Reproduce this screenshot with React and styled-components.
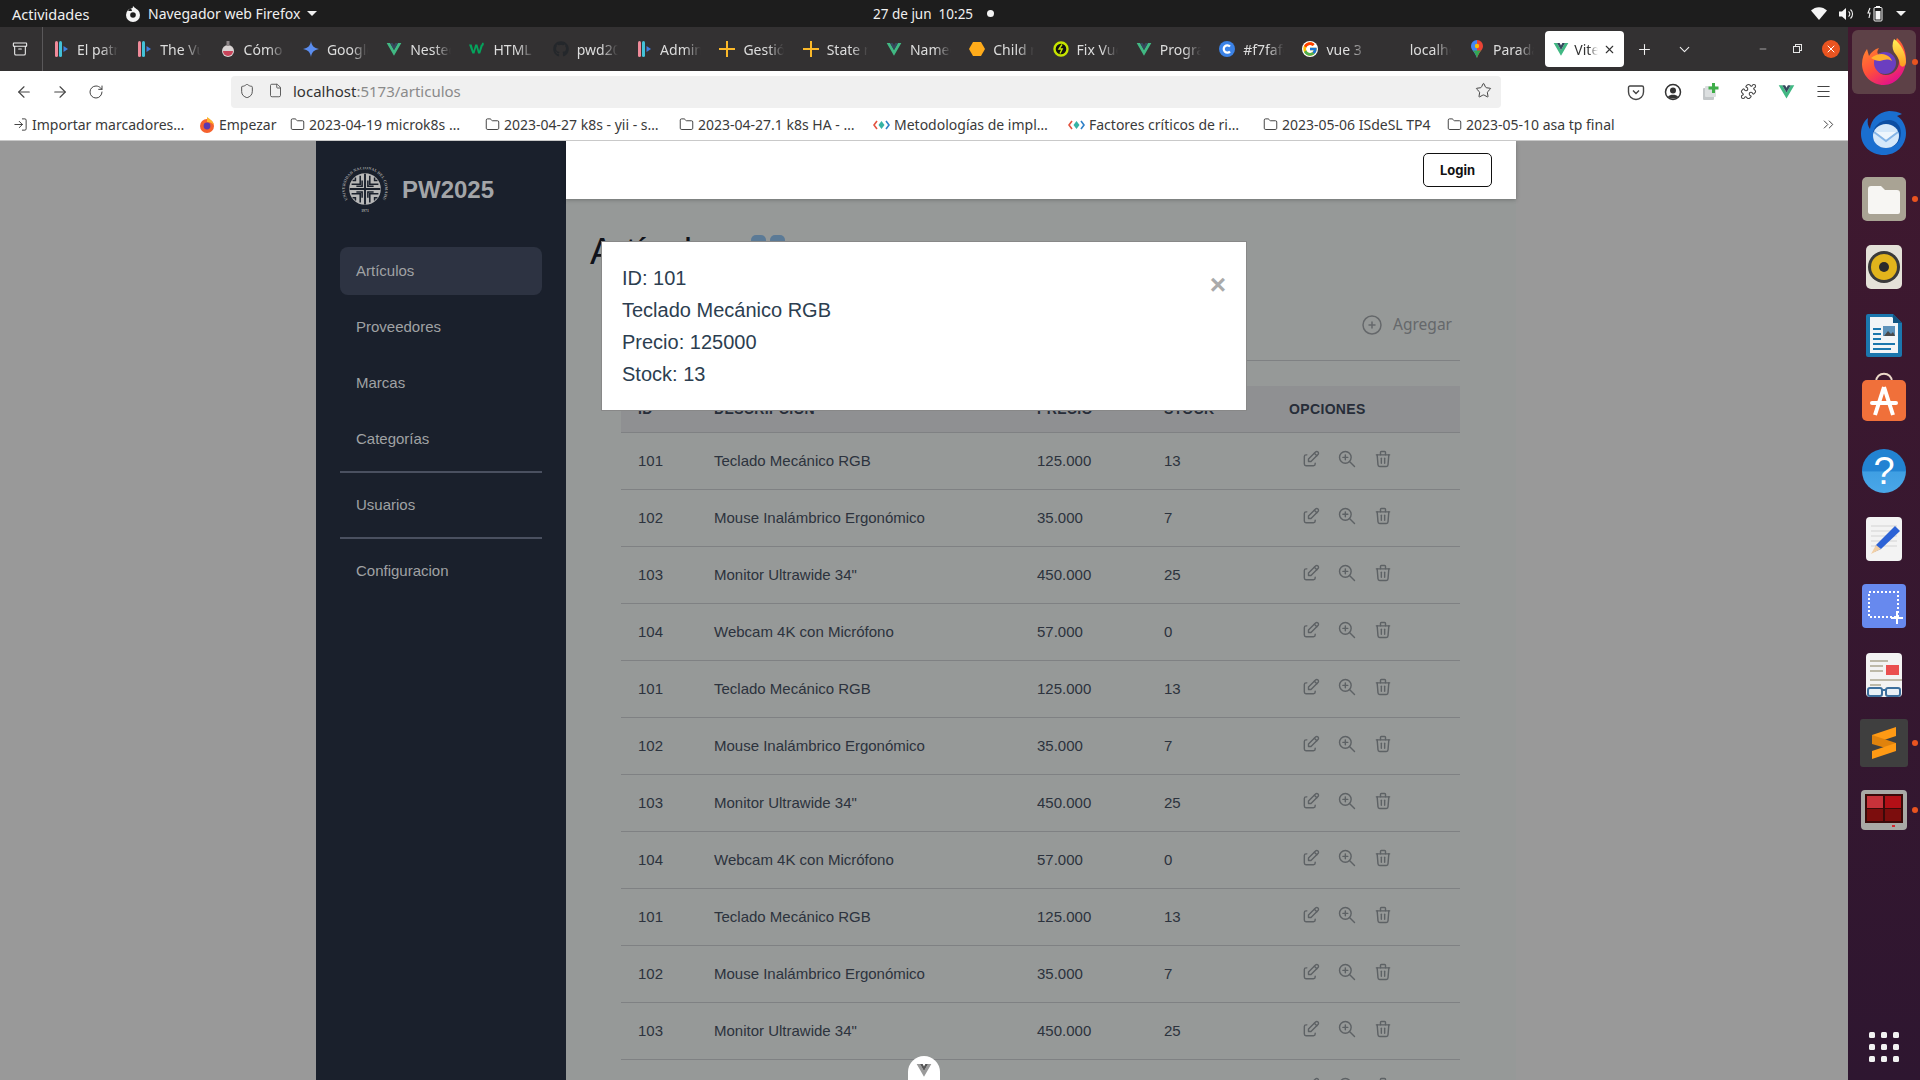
import React from 'react';
import styled, { createGlobalStyle } from 'styled-components';
import { ArrowLeft, ArrowRight, RotateCw, Shield, File, Star, Puzzle, Menu, ChevronsRight, Folder, Plus, ChevronDown, X, Minus, LogIn, Archive } from 'lucide-react';
import { TbEdit, TbZoomIn, TbTrash, TbCirclePlus } from 'react-icons/tb';
import { FcGoogle } from 'react-icons/fc';
import { FaGithub } from 'react-icons/fa';

const GlobalStyle = createGlobalStyle`
  html, body { margin: 0; padding: 0; background: #1d1d1d; }
  * { box-sizing: border-box; }
`;

const UI_FONT = `"Noto Sans", "Open Sans", sans-serif`;
const PAGE_FONT = `"Liberation Sans", Arial, sans-serif`;

const Screen = styled.div`
  width: 1920px;
  height: 1080px;
  overflow: hidden;
  display: flex;
  flex-direction: column;
  font-family: ${UI_FONT};
`;

/* ---------- gnome top bar ---------- */
const TopBar = styled.div`
  height: 27px;
  flex: none;
  background: #1d1d1d;
  color: #f0f0f0;
  font-size: 14px;
  display: flex;
  align-items: center;
  padding: 0 12px;
`;
const Activities = styled.span`
  width: 113px;
  font-size: 14.5px;
`;
const AppMenu = styled.div`
  width: 748px;
  display: flex;
  align-items: center;
  gap: 7px;
`;
const Caret = styled.span`
  width: 0;
  height: 0;
  border-left: 5px solid transparent;
  border-right: 5px solid transparent;
  border-top: 5px solid #f0f0f0;
`;
const Clock = styled.span`
  white-space: pre;
  font-size: 13.5px;
`;
const RecDot = styled.span`
  width: 7px;
  height: 7px;
  border-radius: 50%;
  background: #f4f4f4;
  margin-left: 14px;
`;
const Tray = styled.div`
  margin-left: auto;
  display: flex;
  align-items: center;
  gap: 12px;
  margin-right: 2px;
`;

/* ---------- browser ---------- */
const Desktop = styled.div`
  flex: 1;
  min-height: 0;
  display: flex;
`;
const Browser = styled.div`
  width: 1848px;
  display: flex;
  flex-direction: column;
`;
const TabBar = styled.div`
  height: 44px;
  flex: none;
  background: #333132;
  display: flex;
  align-items: center;
`;
const TabMenu = styled.div`
  width: 43px;
  height: 100%;
  margin-right: 10px;
  border-right: 1px solid #5a585a;
  display: flex;
  align-items: center;
  justify-content: center;
  color: #f0f0f0;
  padding-right: 3px;
`;
const Tab = styled.div`
  width: 83.3px;
  flex: none;
  display: flex;
  align-items: center;
  gap: 8px;
  color: #dddddd;
  font-size: 14px;
  overflow: hidden;
`;
const TabIconBox = styled.span`
  width: 16px;
  height: 16px;
  flex: none;
  display: flex;
  align-items: center;
  justify-content: center;
`;
const TabLabel = styled.span`
  width: 41px;
  white-space: nowrap;
  overflow: hidden;
  mask-image: linear-gradient(to right, #000 60%, transparent 100%);
`;
const ActiveTab = styled.div`
  width: 79px;
  height: 36px;
  margin-left: -7px;
  padding-left: 8px;
  flex: none;
  background: #fff;
  border-radius: 4px;
  display: flex;
  align-items: center;
  gap: 5px;
  color: #333;
  font-size: 14px;
`;
const ActiveLabel = styled(TabLabel)`
  width: 24px;
`;
const TabAction = styled.div`
  width: 40px;
  flex: none;
  color: #f0f0f0;
  display: flex;
  justify-content: center;
`;
const WindowControls = styled.div`
  margin-left: auto;
  display: flex;
  align-items: center;
`;
const WindowButton = styled.div`
  width: 34px;
  display: flex;
  justify-content: center;
  color: #e6e6e6;
`;
const CloseCircle = styled.span`
  width: 18px;
  height: 18px;
  border-radius: 50%;
  background: #e95420;
  color: #fff;
  display: flex;
  align-items: center;
  justify-content: center;
`;
const RestoreGlyph = styled.span`
  width: 7px;
  height: 7px;
  margin: 1px 2px 0 0;
  border: 1px solid #e6e6e6;
  box-shadow: 2px -2px 0 -1px #333132, 2px -2px 0 0 #e6e6e6;
`;

const NavBar = styled.div`
  height: 37px;
  flex: none;
  background: #fff;
  display: flex;
  align-items: center;
  padding: 4px 0 0 6px;
  color: #444;
`;
const NavButton = styled.div`
  width: 36px;
  flex: none;
  display: flex;
  justify-content: center;
`;
const UrlBar = styled.div`
  width: 1270px;
  height: 32px;
  margin: 0 116px 0 117px;
  flex: none;
  background: #f0f0f0;
  border-radius: 4px;
  display: flex;
  align-items: center;
  padding: 0 8px 2px 2px;
  font-size: 15px;
  color: #8a8a8a;
`;
const UrlIcon = styled.span`
  width: 28px;
  display: flex;
  justify-content: center;
  color: #555;
  flex: none;
`;
const UrlHost = styled.span`
  color: #333;
  margin-left: 4px;
`;
const UrlStar = styled.span`
  margin-left: auto;
  display: flex;
  color: #444;
  margin-right: 1px;
`;
const ToolIcon = styled.div`
  width: 37.6px;
  flex: none;
  display: flex;
  justify-content: center;
`;

const BookmarkBar = styled.div`
  height: 33px;
  flex: none;
  background: #fff;
  border-bottom: 1px solid #c9c9c9;
  display: flex;
  align-items: center;
  padding: 1px 0 0 13px;
  font-size: 14px;
  color: #3a3a3a;
`;
const Bookmark = styled.div`
  width: ${p => p.$w}px;
  flex: none;
  display: flex;
  align-items: center;
  gap: 4px;
  white-space: nowrap;
  overflow: hidden;
`;
const BookmarkMore = styled.div`
  margin-left: auto;
  margin-right: 11px;
  display: flex;
  color: #444;
`;

/* ---------- web page ---------- */
const Page = styled.div`
  flex: 1;
  min-height: 0;
  position: relative;
  overflow: hidden;
  background: #fff;
  display: flex;
  padding-left: 316px;
  font-family: ${PAGE_FONT};
`;
const Sidebar = styled.aside`
  width: 250px;
  flex: none;
  background: #1a202c;
  padding: 25px 24px;
  position: relative;
  z-index: 20;
`;
const Brand = styled.div`
  height: 48px;
  margin: 0 0 33px 2px;
  display: flex;
  align-items: center;
  gap: 14px;
  color: #a3a5a8;
  font-size: 24px;
  font-weight: 700;
`;
const NavItem = styled.div`
  height: 48px;
  margin-bottom: 8px;
  padding: 0 0 2px 16px;
  border-radius: 8px;
  display: flex;
  align-items: center;
  font-size: 15px;
  color: #a0a2a4;
  background: ${p => (p.$active ? '#2d3342' : 'transparent')};
`;
const NavDivider = styled.div`
  height: 2px;
  background: #4a5060;
  margin-bottom: 8px;
`;
const Main = styled.main`
  width: 950px;
  flex: none;
  display: flex;
  flex-direction: column;
  background: #fbfffd;
`;
const Header = styled.header`
  height: 58px;
  flex: none;
  background: #fff;
  box-shadow: 0 1px 4px rgba(0, 0, 0, 0.25);
  display: flex;
  align-items: center;
  justify-content: flex-end;
  padding-right: 24px;
  position: relative;
  z-index: 20;
`;
const LoginButton = styled.button`
  width: 69px;
  height: 34px;
  padding: 0;
  background: #fff;
  border: 1px solid #111;
  border-radius: 5px;
  font-family: Inter, sans-serif;
  font-size: 13px;
  font-weight: 700;
  color: #111;
`;
const Content = styled.div`
  padding: 31px 24px 0;
`;
const TitleRow = styled.div`
  display: flex;
  align-items: flex-start;
  gap: 21px;
`;
const Title = styled.h1`
  margin: 0;
  font-size: 36px;
  line-height: 44px;
  font-weight: 400;
  color: #1a202c;
`;
const TitleBadge = styled.div`
  margin-top: 5px;
  display: flex;
  gap: 4px;
`;
const BadgeBlock = styled.span`
  width: 15px;
  height: 24px;
  border-radius: 5px;
  background: #98cbfa;
`;
const Card = styled.div`
  padding: 0 32px 0 31px;
`;
const ActionBar = styled.div`
  height: 87px;
  padding: 39px 8px 0 0;
  border-bottom: 1px solid #d4d8da;
  display: flex;
  align-items: flex-start;
  justify-content: flex-end;
  gap: 9px;
  font-family: ${UI_FONT};
  font-size: 15.5px;
  color: #a8aeb2;
`;
const Grid = styled.div`
  margin-top: 25px;
`;
const HeadRow = styled.div`
  height: 47px;
  padding-left: 17px;
  background: #eef1f4;
  border-bottom: 1px solid #d4d8da;
  display: grid;
  grid-template-columns: 76px 323px 127px 125px 1fr;
  align-items: center;
  font-size: 14px;
  font-weight: 700;
  letter-spacing: 0.35px;
  color: #414b5f;
`;
const BodyRow = styled.div`
  height: 57px;
  padding: 0 0 2px 17px;
  border-bottom: 1px solid #d4d8da;
  display: grid;
  grid-template-columns: 76px 323px 127px 125px 1fr;
  align-items: center;
  font-size: 15px;
  color: #4a5568;
`;
const Options = styled.div`
  display: flex;
  gap: 16px;
  padding: 0 0 2px 12px;
  color: #9ca3a8;
`;
const Overlay = styled.div`
  position: absolute;
  inset: 0;
  z-index: 10;
  background: rgba(0, 0, 0, 0.4);
  display: flex;
  justify-content: center;
  align-items: flex-start;
`;
const Modal = styled.div`
  width: 646px;
  height: 170px;
  margin-top: 100px;
  padding: 20px;
  background: #fff;
  border: 1px solid #888;
  position: relative;
  font-size: 20px;
  line-height: 32px;
  color: #2c3e50;
`;
const CloseX = styled.span`
  position: absolute;
  top: 27px;
  right: 20px;
  font-size: 28px;
  line-height: 32px;
  font-weight: 700;
  color: #aaa;
`;
const DevtoolsPill = styled.div`
  position: absolute;
  left: 908px;
  bottom: 0;
  width: 32px;
  height: 24px;
  z-index: 30;
  background: #fff;
  border-radius: 16px 16px 0 0;
  display: flex;
  justify-content: center;
  padding-top: 6px;
`;

/* ---------- dock ---------- */
const Dock = styled.nav`
  width: 72px;
  flex: none;
  background: linear-gradient(180deg, #41192f 0%, #2e1630 100%);
  display: flex;
  flex-direction: column;
`;
const DockSlot = styled.div`
  height: 60px;
  margin-top: ${p => p.$mt}px;
  flex: none;
  display: flex;
  align-items: center;
  justify-content: center;
  position: relative;
`;
const DockActive = styled.div`
  width: 64px;
  height: 64px;
  flex: none;
  border-radius: 6px;
  background: #5d4147;
  display: flex;
  align-items: center;
  justify-content: center;
`;
const RunDot = styled.span`
  position: absolute;
  right: 2px;
  top: 50%;
  margin-top: -3px;
  width: 6px;
  height: 6px;
  border-radius: 50%;
  background: #e95420;
`;
const AppGrid = styled.div`
  margin-top: auto;
  margin-bottom: 18px;
  align-self: center;
  display: grid;
  grid-template-columns: repeat(3, 6px);
  gap: 6px;
`;
const AppDot = styled.span`
  width: 6px;
  height: 6px;
  border-radius: 1.5px;
  background: #f2f2f2;
`;

/* ---------- drawings ---------- */
const VueLogo = ({ size = 16, light = '#41b883', dark = '#35495e' }) => (
  <svg width={size} height={size} viewBox="0 0 24 24">
    <path d="M1 3h5l6 10.500L18 3h5L12 22z" fill={light} />
    <path d="M6 3l6 10.500L18 3h-4l-2 3.600L10 3z" fill={dark} />
  </svg>
);
const BarsIcon = () => (
  <svg width="16" height="18" viewBox="0 0 16 18">
    <rect x="2" y="1" width="3" height="16" rx="1.500" fill="#f08a9a" />
    <rect x="6" y="1" width="3" height="16" rx="1.500" fill="#43c1d8" />
    <path d="M10.500 6l4.500 3-4.500 3z" fill="#3f7fe0" />
  </svg>
);
const FlaskIcon = () => (
  <svg width="16" height="18" viewBox="0 0 16 18">
    <circle cx="8" cy="11" r="6" fill="#d9d3d3" />
    <path d="M3 11a5 5 0 0 0 10 0z" fill="#c8445a" />
    <rect x="6.500" y="1" width="3" height="5" fill="#8d8587" />
  </svg>
);
const GemStar = () => (
  <svg width="16" height="16" viewBox="0 0 16 16"><path d="M8 0c.6 4.500 3 7.200 8 8-5 .8-7.400 3.500-8 8-.6-4.500-3-7.200-8-8 5-.8 7.400-3.500 8-8z" fill="#5b8def" /></svg>
);
const W3Icon = () => (
  <svg width="18" height="16" viewBox="0 0 18 16"><path d="M0 3h3l2 7 2-7h2.400l2 7 2-7H16l-3.400 10h-2.400L8.200 6l-2 7H3.800z" fill="#05a35c" /><rect x="14.500" y="1" width="2" height="3" fill="#05a35c" /></svg>
);
const CrossSpark = () => (
  <svg width="16" height="16" viewBox="0 0 16 16"><path d="M7 0h2v7h7v2H9v7H7V9H0V7h7z" fill="#fbb929" /></svg>
);
const HexIcon = () => (
  <svg width="16" height="16" viewBox="0 0 16 16"><path d="M4 1h8l4 7-4 7H4L0 8z" fill="#ffab1a" /></svg>
);
const FixIcon = () => (
  <svg width="16" height="16" viewBox="0 0 16 16"><circle cx="8" cy="8" r="6.500" fill="#111" stroke="#c6e400" strokeWidth="2.400" /><path d="M9 3.500L6 8h3.200L7 12.500" stroke="#c6e400" strokeWidth="1.400" fill="none" /></svg>
);
const CIcon = () => (
  <svg width="16" height="16" viewBox="0 0 16 16"><circle cx="8" cy="8" r="8" fill="#3b82e6" /><path d="M11 5.600a3.600 3.600 0 1 0 0 4.800" stroke="#fff" strokeWidth="2.200" fill="none" /></svg>
);
const PinIcon = () => (
  <svg width="14" height="18" viewBox="0 0 14 18">
    <path d="M7 0a6 6 0 0 1 6 6c0 4-4 6-6 12z" fill="#ea4335" />
    <path d="M7 0a6 6 0 0 0-6 6c0 4 4 6 6 12z" fill="#4285f4" />
    <path d="M3 10.500c1.500 2 3 4 4 7.500 1-3.500 2.500-5.500 4-7.500z" fill="#34a853" />
    <circle cx="7" cy="6" r="2.200" fill="#fbbc04" />
  </svg>
);
const MiniFirefox = () => (
  <svg width="16" height="16" viewBox="0 0 16 16">
    <circle cx="8" cy="9" r="7" fill="#f5622e" />
    <path d="M8 0c3 2 6 4 7 8-2-2-4-3-7-3z" fill="#fcb52e" />
    <circle cx="8" cy="9" r="3.400" fill="#5b3ab0" />
  </svg>
);
const MetodIcon = () => (
  <svg width="17" height="14" viewBox="0 0 17 14">
    <path d="M4 3L1 7l3 4" stroke="#e2533f" strokeWidth="1.600" fill="none" />
    <path d="M13 3l3 4-3 4" stroke="#2f80c8" strokeWidth="1.600" fill="none" />
    <path d="M8.500 3l3 4-3 4-3-4z" fill="#35b3a5" />
  </svg>
);
const TopFirefox = () => (
  <svg width="16" height="16" viewBox="0 0 16 16">
    <circle cx="8" cy="9" r="7" fill="#f5f5f5" />
    <circle cx="8" cy="9" r="2.800" fill="#1d1d1d" />
    <path d="M8 0l3 3-4 2z" fill="#f5f5f5" />
    <path d="M3 5a6 6 0 0 1 3-3l1 3z" fill="#1d1d1d" />
  </svg>
);
const WifiGlyph = () => (
  <svg width="16" height="13" viewBox="0 0 16 13"><path d="M0 3.500C4.500-1 11.500-1 16 3.500L8 13z" fill="#f4f4f4" /></svg>
);
const SpeakerGlyph = () => (
  <svg width="16" height="14" viewBox="0 0 16 14">
    <path d="M0 4.500h3L7 1v12L3 9.500H0z" fill="#f4f4f4" />
    <path d="M9.500 4.500a3 3 0 0 1 0 5M11.500 2.500a6 6 0 0 1 0 9" stroke="#f4f4f4" strokeWidth="1.100" fill="none" />
  </svg>
);
const BatteryGlyph = () => (
  <svg width="17" height="17" viewBox="0 0 17 17">
    <path d="M3 3L1 8h2l-1 5" stroke="#f4f4f4" strokeWidth="1.100" fill="none" />
    <rect x="7" y="2.500" width="8" height="13.500" rx="1" fill="none" stroke="#f4f4f4" />
    <rect x="9" y="1" width="4" height="2" fill="#f4f4f4" />
    <rect x="8.500" y="6" width="5" height="8.500" fill="#f4f4f4" />
  </svg>
);
const ExtIcon = () => (
  <svg width="18" height="18" viewBox="0 0 18 18">
    <rect x="1" y="5" width="11" height="12" rx="1" fill="#c3c7c9" />
    <rect x="3" y="3" width="11" height="11" rx="1" fill="#dcdfe0" />
    <path d="M10 0h3v3.500h3.500v3H13V10h-3V6.500H6.500v-3H10z" fill="#3fae49" />
  </svg>
);
const PocketIcon = () => (
  <svg width="18" height="18" viewBox="0 0 18 18">
    <path d="M3 3h12a1.500 1.500 0 0 1 1.500 1.500V9a7.500 7.500 0 0 1-15 0V4.500A1.500 1.500 0 0 1 3 3z" fill="none" stroke="#444" strokeWidth="1.400" />
    <path d="M6 7.500l3 3 3-3" fill="none" stroke="#444" strokeWidth="1.400" />
  </svg>
);
const ProfileIcon = () => (
  <svg width="18" height="18" viewBox="0 0 18 18">
    <circle cx="9" cy="9" r="7.500" fill="none" stroke="#333" strokeWidth="1.500" />
    <circle cx="9" cy="7.500" r="3" fill="#333" />
    <path d="M4 13.500c2-2.500 8-2.500 10 0l-2 2H6z" fill="#333" />
  </svg>
);

const UncoLogo = () => (
  <svg width="46" height="46" viewBox="0 0 48 48">
    <defs><path id="seal" d="M6 34A21 21 0 1 1 42 34" /></defs>
    <text fontSize="4.200" fontFamily="Liberation Serif, serif" fill="#a8a8a8" letterSpacing=".15"><textPath href="#seal">UNIVERSIDAD NACIONAL DEL COMAHUE</textPath></text>
    <circle cx="24" cy="23" r="16.500" fill="#b8b8b8" />
    <g stroke="#1a202c" strokeWidth="1.600" fill="none">
      <path d="M24 7v32M8 23h32" strokeWidth="2" />
      <path d="M19 9v9h-9M29 9v9h9M19 37v-9h-9M29 37v-9h9" />
      <path d="M14 11v3h-3M34 11v3h3M14 35v-3h-3M34 35v-3h3" />
      <path d="M21 14v6h-6M27 14v6h6M21 32v-6h-6M27 32v-6h6" />
    </g>
    <text x="24" y="47" textAnchor="middle" fontSize="4" fontFamily="Liberation Serif, serif" fill="#a8a8a8">1971</text>
  </svg>
);

const FirefoxApp = () => (
  <svg width="48" height="48" viewBox="0 0 48 48">
    <defs>
      <linearGradient id="ffBody" x1="0" y1="0" x2="0.600" y2="1">
        <stop offset="0" stopColor="#ff9a2b" />
        <stop offset="0.600" stopColor="#ff4f3a" />
        <stop offset="1" stopColor="#e3128a" />
      </linearGradient>
      <linearGradient id="ffTop" x1="0.500" y1="0" x2="0.500" y2="1">
        <stop offset="0" stopColor="#fff157" />
        <stop offset="1" stopColor="#ff9a1f" />
      </linearGradient>
    </defs>
    <path d="M24 47C11 47 2 37 2 26c0-6 2-11 5-15l2 7c2-4 6-7 10-8-2 3-2 5-1 6 4-2 9-1 11 1 5 5 3 14-5 14-5 0-8-4-6-8-4 6 0 14 8 14 8 0 13-7 13-13 0-6-3-9-5-13 0-3 1-7 3-11 5 4 9 12 9 21 0 14-10 26-22 26z" fill="url(#ffBody)" />
    <path d="M34 1c-2 5-2 9 0 13 3 4 6 8 6 13 3 4 6 0 6-3 0-9-5-18-12-23z" fill="url(#ffTop)" />
    <circle cx="25" cy="25" r="11" fill="#6b3ec0" />
    <path d="M11 20c5-4 11-5 15-3 3 1 5 3 6 6-5-3-8-1-12 0-3 0-6-1-9-3z" fill="#ffb02e" />
  </svg>
);
const ThunderbirdApp = () => (
  <svg width="48" height="48" viewBox="0 0 48 48">
    <path d="M24 47C10 47 1 37 1 26c0-6 2-12 7-16-1 5 0 8 2 11 1-9 8-17 19-18 5 0 10 1 13 3l-5 2c5 3 9 9 9 17 0 13-10 22-22 22z" fill="#1a6fd0" />
    <path d="M13 26c0-8 8-14 16-14 7 0 12 6 12 13 0 9-7 15-15 15-8 0-13-6-13-14z" fill="#0c4ea3" />
    <ellipse cx="26" cy="28" rx="13" ry="12" fill="#d5e8fa" />
    <path d="M14 24l12 9 12-9" stroke="#84b4e6" strokeWidth="2" fill="#eef6fd" />
  </svg>
);
const FilesApp = () => (
  <svg width="44" height="44" viewBox="0 0 44 44">
    <rect width="44" height="44" rx="5" fill="#a9a394" />
    <path d="M6 12a3 3 0 0 1 3-3h10l4 4h12a3 3 0 0 1 3 3v19a2 2 0 0 1-2 2H8a2 2 0 0 1-2-2z" fill="#f7f6f3" />
  </svg>
);
const RhythmApp = () => (
  <svg width="36" height="44" viewBox="0 0 36 44">
    <rect width="36" height="44" rx="5" fill="#e4e1d8" />
    <circle cx="18" cy="22" r="16" fill="#3a3a3a" />
    <circle cx="18" cy="22" r="13" fill="#e2b41c" />
    <circle cx="18" cy="22" r="5" fill="#2b2b2b" />
  </svg>
);
const WriterApp = () => (
  <svg width="36" height="44" viewBox="0 0 36 44">
    <path d="M2 1h25l9 9v32a2 2 0 0 1-2 2H2a2 2 0 0 1-2-2V3a2 2 0 0 1 2-2z" fill="#1b77ae" />
    <path d="M4 4h22l6 6v30H4z" fill="#f2f5f7" />
    <path d="M27 1l9 9h-9z" fill="#125582" />
    <rect x="7" y="15" width="8" height="2" fill="#1b77ae" />
    <rect x="7" y="20" width="8" height="2" fill="#1b77ae" />
    <rect x="7" y="25" width="8" height="2" fill="#1b77ae" />
    <rect x="7" y="30" width="22" height="2" fill="#1b77ae" />
    <rect x="7" y="35" width="18" height="2" fill="#1b77ae" />
    <rect x="17" y="13" width="12" height="10" fill="#5e93bb" />
    <path d="M18 23l4-5 3 3 2-2 2 4z" fill="#4a4a4a" />
  </svg>
);
const StoreApp = () => (
  <svg width="44" height="50" viewBox="0 0 44 50">
    <path d="M14 10c0-11 16-11 16 0" fill="none" stroke="#ecd9c8" strokeWidth="2" />
    <rect y="8" width="44" height="41" rx="5" fill="#f0703a" />
    <path d="M22 15L13 43M22 15l9 28" stroke="#fff" strokeWidth="4" fill="none" />
    <rect x="8" y="29" width="28" height="4" rx="2" fill="#fff" />
  </svg>
);
const HelpApp = () => (
  <svg width="44" height="44" viewBox="0 0 44 44">
    <defs>
      <linearGradient id="helpBlue" x1="0" y1="0" x2="0" y2="1">
        <stop offset="0" stopColor="#2283d2" />
        <stop offset="0.500" stopColor="#2283d2" />
        <stop offset="0.520" stopColor="#3f9fe3" />
        <stop offset="1" stopColor="#4aa7e8" />
      </linearGradient>
    </defs>
    <circle cx="22" cy="22" r="22" fill="url(#helpBlue)" />
    <text x="22" y="35" textAnchor="middle" fontFamily="Liberation Sans, sans-serif" fontSize="38" fill="#fff">?</text>
  </svg>
);
const EditorApp = () => (
  <svg width="36" height="44" viewBox="0 0 36 44">
    <rect width="36" height="44" rx="4" fill="#f3f3f3" />
    <path d="M5 9h26M5 14h26M5 19h26M5 24h26M5 29h26" stroke="#d3d3d3" />
    <path d="M29 9l5 5-19 18-7 3 2-7z" fill="#2c62d6" />
    <path d="M10 28l5 4-10 5z" fill="#f1cfa6" />
  </svg>
);
const ShotApp = () => (
  <svg width="44" height="44" viewBox="0 0 44 44">
    <rect width="44" height="44" rx="4" fill="#6789ee" />
    <rect x="7" y="8" width="29" height="25" fill="none" stroke="#fff" strokeWidth="2" strokeDasharray="2 2" />
    <path d="M35 27v13M29 34h12" stroke="#fff" strokeWidth="2" />
  </svg>
);
const ReaderApp = () => (
  <svg width="36" height="44" viewBox="0 0 36 44">
    <rect width="36" height="44" rx="4" fill="#f3f3f3" />
    <path d="M4 8h18M4 13h13M4 18h13M4 27h32M4 32h11" stroke="#bdb9a8" strokeWidth="2" />
    <rect x="20" y="12" width="13" height="10" fill="#ea4f4f" />
    <rect x="2" y="35" width="14" height="8" rx="2" fill="#e8f0f6" stroke="#3c6f9d" strokeWidth="2" />
    <rect x="20" y="35" width="14" height="8" rx="2" fill="#e8f0f6" stroke="#3c6f9d" strokeWidth="2" />
    <path d="M16 37h4" stroke="#3c6f9d" strokeWidth="2" />
  </svg>
);
const SublimeApp = () => (
  <svg width="48" height="48" viewBox="0 0 48 48">
    <rect width="48" height="48" rx="3" fill="#3f3f3f" />
    <path d="M12 16L36 8v9L12 25z" fill="#ff9a14" />
    <path d="M12 16l24 8v8l-24-7z" fill="#e0820c" />
    <path d="M36 24v8l-24 8v-8z" fill="#ff9a14" />
  </svg>
);
const TerminalApp = () => (
  <svg width="46" height="40" viewBox="0 0 46 40">
    <rect width="46" height="40" rx="4" fill="#a9a9a6" />
    <rect x="4" y="4" width="38" height="29" fill="#3a0a0a" />
    <rect x="6" y="6" width="16" height="12" fill="#c8323a" />
    <rect x="24" y="6" width="16" height="12" fill="#b30f16" />
    <rect x="6" y="19" width="16" height="12" fill="#7c0d0d" />
    <rect x="24" y="19" width="16" height="12" fill="#7c0d0d" />
    <rect x="31" y="35" width="3" height="2" fill="#d6262e" />
  </svg>
);

const tabs = [
  ['El patrón', <BarsIcon />],
  ['The Vue', <BarsIcon />],
  ['Cómo', <FlaskIcon />],
  ['Google', <GemStar />],
  ['Nested', <VueLogo />],
  ['HTML', <W3Icon />],
  ['pwd2025', <FaGithub size={16} color="#24272b" />],
  ['Admin', <BarsIcon />],
  ['Gestión', <CrossSpark />],
  ['State m', <CrossSpark />],
  ['Named', <VueLogo />],
  ['Child r', <HexIcon />],
  ['Fix Vue', <FixIcon />],
  ['Program', <VueLogo />],
  ['#f7fafc', <CIcon />],
  ['vue 3', <FcGoogle size={16} style={{ background: '#fff', borderRadius: '50%' }} />],
  ['localhost', null],
  ['Parada', <PinIcon />],
];

const bookmarks = [
  ['Importar marcadores…', 186, <LogIn size={15} strokeWidth={1.5} />],
  ['Empezar', 91, <MiniFirefox />],
  ['2023-04-19 microk8s …', 195, <Folder size={15} strokeWidth={1.5} />],
  ['2023-04-27 k8s - yii - s…', 194, <Folder size={15} strokeWidth={1.5} />],
  ['2023-04-27.1 k8s HA - …', 194, <Folder size={15} strokeWidth={1.5} />],
  ['Metodologías de impl…', 195, <MetodIcon />],
  ['Factores críticos de ri…', 195, <MetodIcon />],
  ['2023-05-06 ISdeSL TP4', 184, <Folder size={15} strokeWidth={1.5} />],
  ['2023-05-10 asa tp final', 190, <Folder size={15} strokeWidth={1.5} />],
];

const products = [
  { id: 101, name: 'Teclado Mecánico RGB', price: '125.000', stock: 13 },
  { id: 102, name: 'Mouse Inalámbrico Ergonómico', price: '35.000', stock: 7 },
  { id: 103, name: 'Monitor Ultrawide 34"', price: '450.000', stock: 25 },
  { id: 104, name: 'Webcam 4K con Micrófono', price: '57.000', stock: 0 },
];
const rows = Array.from({ length: 12 }, (_, i) => products[i % 4]);

const dockApps = [
  { mt: 5, el: <DockActive><FirefoxApp /></DockActive>, run: true },
  { mt: 10, el: <ThunderbirdApp /> },
  { mt: 7, el: <FilesApp />, run: true },
  { mt: 8, el: <RhythmApp /> },
  { mt: 8, el: <WriterApp /> },
  { mt: 2, el: <StoreApp /> },
  { mt: 14, el: <HelpApp /> },
  { mt: 8, el: <EditorApp /> },
  { mt: 7, el: <ShotApp /> },
  { mt: 9, el: <ReaderApp /> },
  { mt: 8, el: <SublimeApp />, run: true },
  { mt: 7, el: <TerminalApp />, run: true },
];

export default function App() {
  return (
    <Screen>
      <GlobalStyle />
      <TopBar>
        <Activities>Actividades</Activities>
        <AppMenu>
          <TopFirefox />
          <span>Navegador web Firefox</span>
          <Caret />
        </AppMenu>
        <Clock>27 de jun  10:25</Clock>
        <RecDot />
        <Tray>
          <WifiGlyph />
          <SpeakerGlyph />
          <BatteryGlyph />
          <Caret />
        </Tray>
      </TopBar>
      <Desktop>
        <Browser>
          <TabBar>
            <TabMenu><Archive size={16} strokeWidth={1.6} /></TabMenu>
            {tabs.map(([label, icon]) => (
              <Tab key={label}>
                <TabIconBox>{icon}</TabIconBox>
                <TabLabel>{label}</TabLabel>
              </Tab>
            ))}
            <ActiveTab>
              <VueLogo />
              <ActiveLabel>Vite</ActiveLabel>
              <X size={13} strokeWidth={2} />
            </ActiveTab>
            <TabAction><Plus size={17} strokeWidth={1.5} /></TabAction>
            <TabAction><ChevronDown size={17} strokeWidth={1.5} /></TabAction>
            <WindowControls>
              <WindowButton><Minus size={10} strokeWidth={1.5} /></WindowButton>
              <WindowButton><RestoreGlyph /></WindowButton>
              <WindowButton><CloseCircle><X size={12} strokeWidth={2} /></CloseCircle></WindowButton>
            </WindowControls>
          </TabBar>
          <NavBar>
            <NavButton><ArrowLeft size={18} strokeWidth={1.5} /></NavButton>
            <NavButton><ArrowRight size={18} strokeWidth={1.5} /></NavButton>
            <NavButton><RotateCw size={16} strokeWidth={1.5} /></NavButton>
            <UrlBar>
              <UrlIcon><Shield size={16} strokeWidth={1.5} /></UrlIcon>
              <UrlIcon><File size={15} strokeWidth={1.5} /></UrlIcon>
              <UrlHost>localhost</UrlHost>:5173/articulos
              <UrlStar><Star size={17} strokeWidth={1.4} /></UrlStar>
            </UrlBar>
            <ToolIcon><PocketIcon /></ToolIcon>
            <ToolIcon><ProfileIcon /></ToolIcon>
            <ToolIcon><ExtIcon /></ToolIcon>
            <ToolIcon><Puzzle size={17} strokeWidth={1.5} /></ToolIcon>
            <ToolIcon><VueLogo size={17} /></ToolIcon>
            <ToolIcon><Menu size={17} strokeWidth={1.5} /></ToolIcon>
          </NavBar>
          <BookmarkBar>
            {bookmarks.map(([label, w, icon]) => (
              <Bookmark key={label} $w={w}>{icon}<span>{label}</span></Bookmark>
            ))}
            <BookmarkMore><ChevronsRight size={17} strokeWidth={1.4} /></BookmarkMore>
          </BookmarkBar>
          <Page>
            <Sidebar>
              <Brand><UncoLogo />PW2025</Brand>
              <NavItem $active>Artículos</NavItem>
              <NavItem>Proveedores</NavItem>
              <NavItem>Marcas</NavItem>
              <NavItem>Categorías</NavItem>
              <NavDivider />
              <NavItem>Usuarios</NavItem>
              <NavDivider />
              <NavItem>Configuracion</NavItem>
            </Sidebar>
            <Main>
              <Header><LoginButton>Login</LoginButton></Header>
              <Content>
                <TitleRow>
                  <Title>Artículos</Title>
                  <TitleBadge><BadgeBlock /><BadgeBlock /></TitleBadge>
                </TitleRow>
                <Card>
                  <ActionBar>
                    <TbCirclePlus size={24} strokeWidth={1.5} />
                    Agregar
                  </ActionBar>
                  <Grid>
                    <HeadRow>
                      <span>ID</span>
                      <span>DESCRIPCIÓN</span>
                      <span>PRECIO</span>
                      <span>STOCK</span>
                      <span>OPCIONES</span>
                    </HeadRow>
                    {rows.map((row, i) => (
                      <BodyRow key={i}>
                        <span>{row.id}</span>
                        <span>{row.name}</span>
                        <span>{row.price}</span>
                        <span>{row.stock}</span>
                        <Options>
                          <TbEdit size={20} strokeWidth={1.7} />
                          <TbZoomIn size={20} strokeWidth={1.7} />
                          <TbTrash size={20} strokeWidth={1.7} />
                        </Options>
                      </BodyRow>
                    ))}
                  </Grid>
                </Card>
              </Content>
            </Main>
            <Overlay>
              <Modal>
                <div>ID: 101</div>
                <div>Teclado Mecánico RGB</div>
                <div>Precio: 125000</div>
                <div>Stock: 13</div>
                <CloseX>×</CloseX>
              </Modal>
            </Overlay>
            <DevtoolsPill><VueLogo size={16} light="#9a9a9a" dark="#555" /></DevtoolsPill>
          </Page>
        </Browser>
        <Dock>
          {dockApps.map((app, i) => (
            <DockSlot key={i} $mt={app.mt}>
              {app.el}
              {app.run && <RunDot />}
            </DockSlot>
          ))}
          <AppGrid>
            {Array.from({ length: 9 }, (_, i) => <AppDot key={i} />)}
          </AppGrid>
        </Dock>
      </Desktop>
    </Screen>
  );
}
